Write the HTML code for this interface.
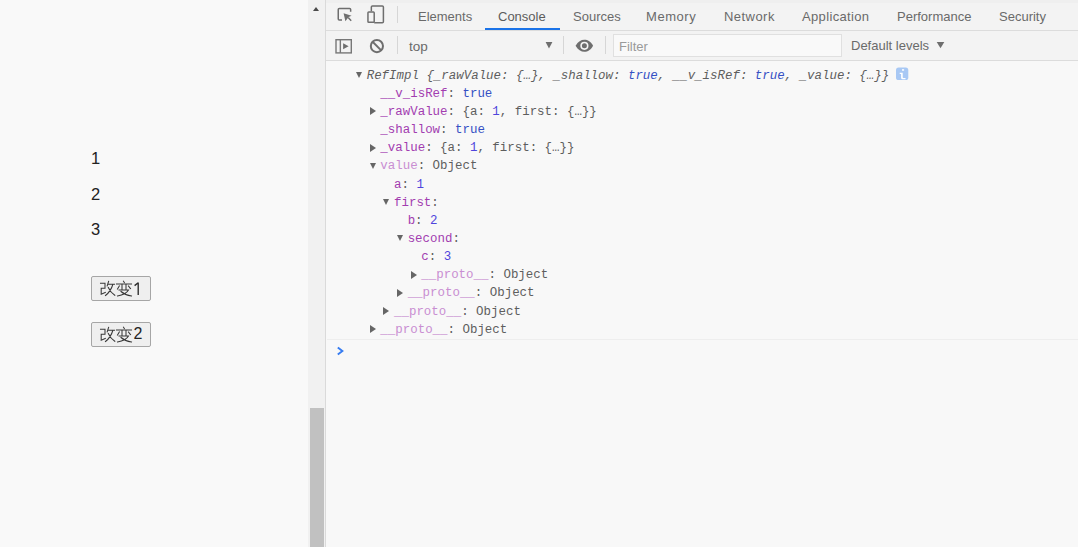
<!DOCTYPE html>
<html><head><meta charset="utf-8">
<style>
*{box-sizing:border-box;margin:0;padding:0}
html,body{width:1078px;height:547px;overflow:hidden;background:#f9f9f9;position:relative;font-family:"Liberation Sans",sans-serif}
.a{position:absolute}
.num{position:absolute;left:91px;font-size:16.5px;color:#222;line-height:20px}
.btxt{position:absolute;left:133.5px;font-size:16px;line-height:18px;color:#222}
.btn{position:absolute;left:91px;width:60px;height:25px;background:#efefef;border:1px solid #a6a6a6;border-radius:2px}
#track{left:308px;top:0;width:17px;height:547px;background:#f1f1f1}
#thumb{left:310px;top:408px;width:14px;height:139px;background:#c1c1c1}
#vborder{left:325px;top:0;width:1px;height:547px;background:#dadada}
#dt{left:326px;top:0;width:752px;height:547px;background:#f8f8f8}
#tabbar{left:0;top:0;width:752px;height:30px;background:#f3f3f3}
#tb2{left:0;top:31px;width:752px;height:29px;background:#f3f3f3}
.hl{height:1px;background:#dcdcdc}
.tab{position:absolute;top:8.5px;font-size:13px;color:#6a6a6a;line-height:16px;white-space:nowrap}
.sep{position:absolute;width:1px;background:#d6d6d6}
.con{position:absolute;font-family:"Liberation Mono",monospace;font-size:12.45px;line-height:18px;white-space:pre;color:#5e5e5e}
.p{color:#a23db0}
.pl{color:#c98ed2}
.n{color:#4f45dc}
.b{color:#3550c4}
.g{color:#505050}
.tri{position:absolute;width:0;height:0}
.tr{border-left:6px solid #666;border-top:4px solid transparent;border-bottom:4px solid transparent}
.td{border-top:6.5px solid #666;border-left:3.5px solid transparent;border-right:3.5px solid transparent}
</style></head>
<body>
<div class="num" style="top:148px">1</div>
<div class="num" style="top:184px">2</div>
<div class="num" style="top:219px">3</div>
<div class="btn" style="top:276px"></div>
<div class="btn" style="top:322px"></div>

<svg class="a" style="left:0;top:0" width="330" height="547"><g fill="none" stroke="#383838" stroke-width="1.05" stroke-linecap="square">
  <g transform="translate(100,281)"><path d="M0.5,2.2H5V7.2H1.2V13.3L5.3,11.5"/><path d="M8.6,0.3L7.2,4.8M8,3.2H14.5M12.8,3.5Q11,10 5.5,14.5M8.3,6.5Q10.5,11.5 14.8,14.3"/></g>
  <g transform="translate(116,281)"><path d="M7.5,0.2L8.3,1.6M0.5,3H15.5M6,3V8M10,3V8M3.3,5L1.5,8M12.5,5L14.5,7.6M3,9H12.5Q10,13.5 1.5,15M5,10.5Q9,14 15.5,15"/></g>
 </g><g fill="none" stroke="#383838" stroke-width="1.05" stroke-linecap="square">
  <g transform="translate(100,327)"><path d="M0.5,2.2H5V7.2H1.2V13.3L5.3,11.5"/><path d="M8.6,0.3L7.2,4.8M8,3.2H14.5M12.8,3.5Q11,10 5.5,14.5M8.3,6.5Q10.5,11.5 14.8,14.3"/></g>
  <g transform="translate(116,327)"><path d="M7.5,0.2L8.3,1.6M0.5,3H15.5M6,3V8M10,3V8M3.3,5L1.5,8M12.5,5L14.5,7.6M3,9H12.5Q10,13.5 1.5,15M5,10.5Q9,14 15.5,15"/></g>
 </g><path d="M138.2,282.6V295M138.2,282.8L134.6,285.6" fill="none" stroke="#2a2a2a" stroke-width="1.35"/></svg>
<div class="btxt" style="top:325px">2</div>
<div id="track" class="a"></div>
<div class="a" style="left:313px;top:7px;width:0;height:0;border-left:3.5px solid transparent;border-right:3.5px solid transparent;border-bottom:4.5px solid #4a4a4a"></div>
<div id="thumb" class="a"></div>
<div id="vborder" class="a"></div>

<div id="dt" class="a">
  <div id="tabbar" class="a"></div>
  <div class="a" style="left:0;top:0;width:752px;height:3px;background:#efefef"></div>
  <div class="a hl" style="left:0;top:30px;width:752px"></div>
  <div id="tb2" class="a"></div>
  <div class="a hl" style="left:0;top:60px;width:752px"></div>

  <div class="tab" style="left:92px">Elements</div>
  <div class="tab" style="left:172px;color:#5c5c5c">Console</div>
  <div class="a" style="left:159px;top:28px;width:75px;height:2px;background:#1a73e8"></div>
  <div class="tab" style="left:247px">Sources</div>
  <div class="tab" style="left:320px;letter-spacing:0.55px">Memory</div>
  <div class="tab" style="left:398px;letter-spacing:0.45px">Network</div>
  <div class="tab" style="left:476px;letter-spacing:0.35px">Application</div>
  <div class="tab" style="left:571px">Performance</div>
  <div class="tab" style="left:673px">Security</div>
  <div class="sep" style="left:71px;top:6px;height:17px"></div>

  <div class="tab" style="left:83px;top:38.8px;color:#6a6a6a;font-size:13.5px">top</div>
  <div class="sep" style="left:71px;top:36px;height:18px"></div>
  <div class="sep" style="left:237px;top:36px;height:18px"></div>
  <div class="sep" style="left:279px;top:36px;height:18px"></div>
  <div class="a" style="left:287px;top:34px;width:229px;height:23px;background:#f9f9f9;border:1px solid #e0e0e0"></div>
  <div class="tab" style="left:293px;top:39px;color:#9a9a9a">Filter</div>
  <div class="tab" style="left:525px;top:38.3px;color:#6a6a6a">Default levels</div>

  <div class="con" style="left:40.70px;top:66.60px"><i>RefImpl {_rawValue: {…}, _shallow: <span class="b">true</span>, __v_isRef: <span class="b">true</span>, _value: {…}}</i></div>
  <div class="tri td" style="left:30.10px;top:72.00px"></div>
  <div class="con" style="left:54.35px;top:84.75px"><span class="p">__v_isRef</span>: <span class="b">true</span></div>
  <div class="con" style="left:54.35px;top:102.90px"><span class="p">_rawValue</span>: {a: <span class="n">1</span>, first: {…}}</div>
  <div class="tri tr" style="left:43.65px;top:107.40px"></div>
  <div class="con" style="left:54.35px;top:121.05px"><span class="p">_shallow</span>: <span class="b">true</span></div>
  <div class="con" style="left:54.35px;top:139.20px"><span class="p">_value</span>: {a: <span class="n">1</span>, first: {…}}</div>
  <div class="tri tr" style="left:43.65px;top:143.70px"></div>
  <div class="con" style="left:54.35px;top:157.35px"><span class="pl">value</span>: Object</div>
  <div class="tri td" style="left:43.75px;top:162.75px"></div>
  <div class="con" style="left:68.00px;top:175.50px"><span class="p">a</span>: <span class="n">1</span></div>
  <div class="con" style="left:68.00px;top:193.65px"><span class="p">first</span>:</div>
  <div class="tri td" style="left:57.40px;top:199.05px"></div>
  <div class="con" style="left:81.65px;top:211.80px"><span class="p">b</span>: <span class="n">2</span></div>
  <div class="con" style="left:81.65px;top:229.95px"><span class="p">second</span>:</div>
  <div class="tri td" style="left:71.05px;top:235.35px"></div>
  <div class="con" style="left:95.30px;top:248.10px"><span class="p">c</span>: <span class="n">3</span></div>
  <div class="con" style="left:95.30px;top:266.25px"><span class="pl">__proto__</span>: Object</div>
  <div class="tri tr" style="left:84.60px;top:270.75px"></div>
  <div class="con" style="left:81.65px;top:284.40px"><span class="pl">__proto__</span>: Object</div>
  <div class="tri tr" style="left:70.95px;top:288.90px"></div>
  <div class="con" style="left:68.00px;top:302.55px"><span class="pl">__proto__</span>: Object</div>
  <div class="tri tr" style="left:57.30px;top:307.05px"></div>
  <div class="con" style="left:54.35px;top:320.70px"><span class="pl">__proto__</span>: Object</div>
  <div class="tri tr" style="left:43.65px;top:325.20px"></div>
  <div class="a hl" style="left:1px;top:339px;width:751px;background:#eeeeee"></div>
</div>
<svg class="a" style="left:0;top:0" width="1078" height="547" viewBox="0 0 1078 547">
 <g fill="none" stroke="#6e6e6e" stroke-width="1.5">
  <path d="M342,20.1H339.3Q338.25,20.1 338.25,19.05V9.5Q338.25,8.45 339.3,8.45H349.6Q350.65,8.45 350.65,9.5V11.7"/>
  <path d="M348.2,17.6L351.2,20.8"/>
  <path d="M371.35,11.3V7Q371.35,5.9 372.45,5.9H382.3Q383.4,5.9 383.4,7V21.7Q383.4,22.75 382.3,22.75H374.2"/>
  <rect x="367.95" y="12" width="6.25" height="10.25" rx="0.8"/>
  <rect x="336" y="39.7" width="15.3" height="13.2" stroke="#777" stroke-width="1.4"/>
  <path d="M340.35,39.7V52.9" stroke="#777" stroke-width="1.4"/>
  <circle cx="376.9" cy="46.1" r="6.1" stroke-width="2"/>
  <path d="M372.6,41.8L381.2,50.4" stroke-width="2"/>
 </g>
 <g fill="#6e6e6e">
  <path d="M343.6,13.2L351.6,15.7L348.6,17.1L345.4,21.3Z"/>
  <path d="M343.1,43.2L348.6,46.25L343.1,49.3Z"/>
  <path d="M545.6,41.9H552.4L549,48.4Z"/>
  <path d="M936.7,41.9H944.3L940.5,48.3Z"/>
  <path d="M575.6,45.8C578,41.5 581,39.8 584.4,39.8C587.8,39.8 590.8,41.5 593.1,45.8C590.8,50.1 587.8,51.8 584.4,51.8C581,51.8 578,50.1 575.6,45.8Z"/>
 </g>
 <circle cx="584.4" cy="45.8" r="3.3" fill="none" stroke="#f3f3f3" stroke-width="1.6"/>
 <rect x="896" y="67.6" width="12.3" height="12.4" rx="2.6" fill="#a8c8f4"/>
 <g fill="#fff">
  <rect x="902" y="69.2" width="2.1" height="1.5"/>
  <path d="M899.7,72.8H902.7V77.3Q902.7,78 903.4,78H905.5V79.2H902.6Q901.1,79.2 901.1,77.7V74H899.7Z"/>
 </g>
 <path d="M337.8,347.4L342.4,351L337.8,354.6" fill="none" stroke="#367cf1" stroke-width="1.9"/>
</svg>
</body></html>
